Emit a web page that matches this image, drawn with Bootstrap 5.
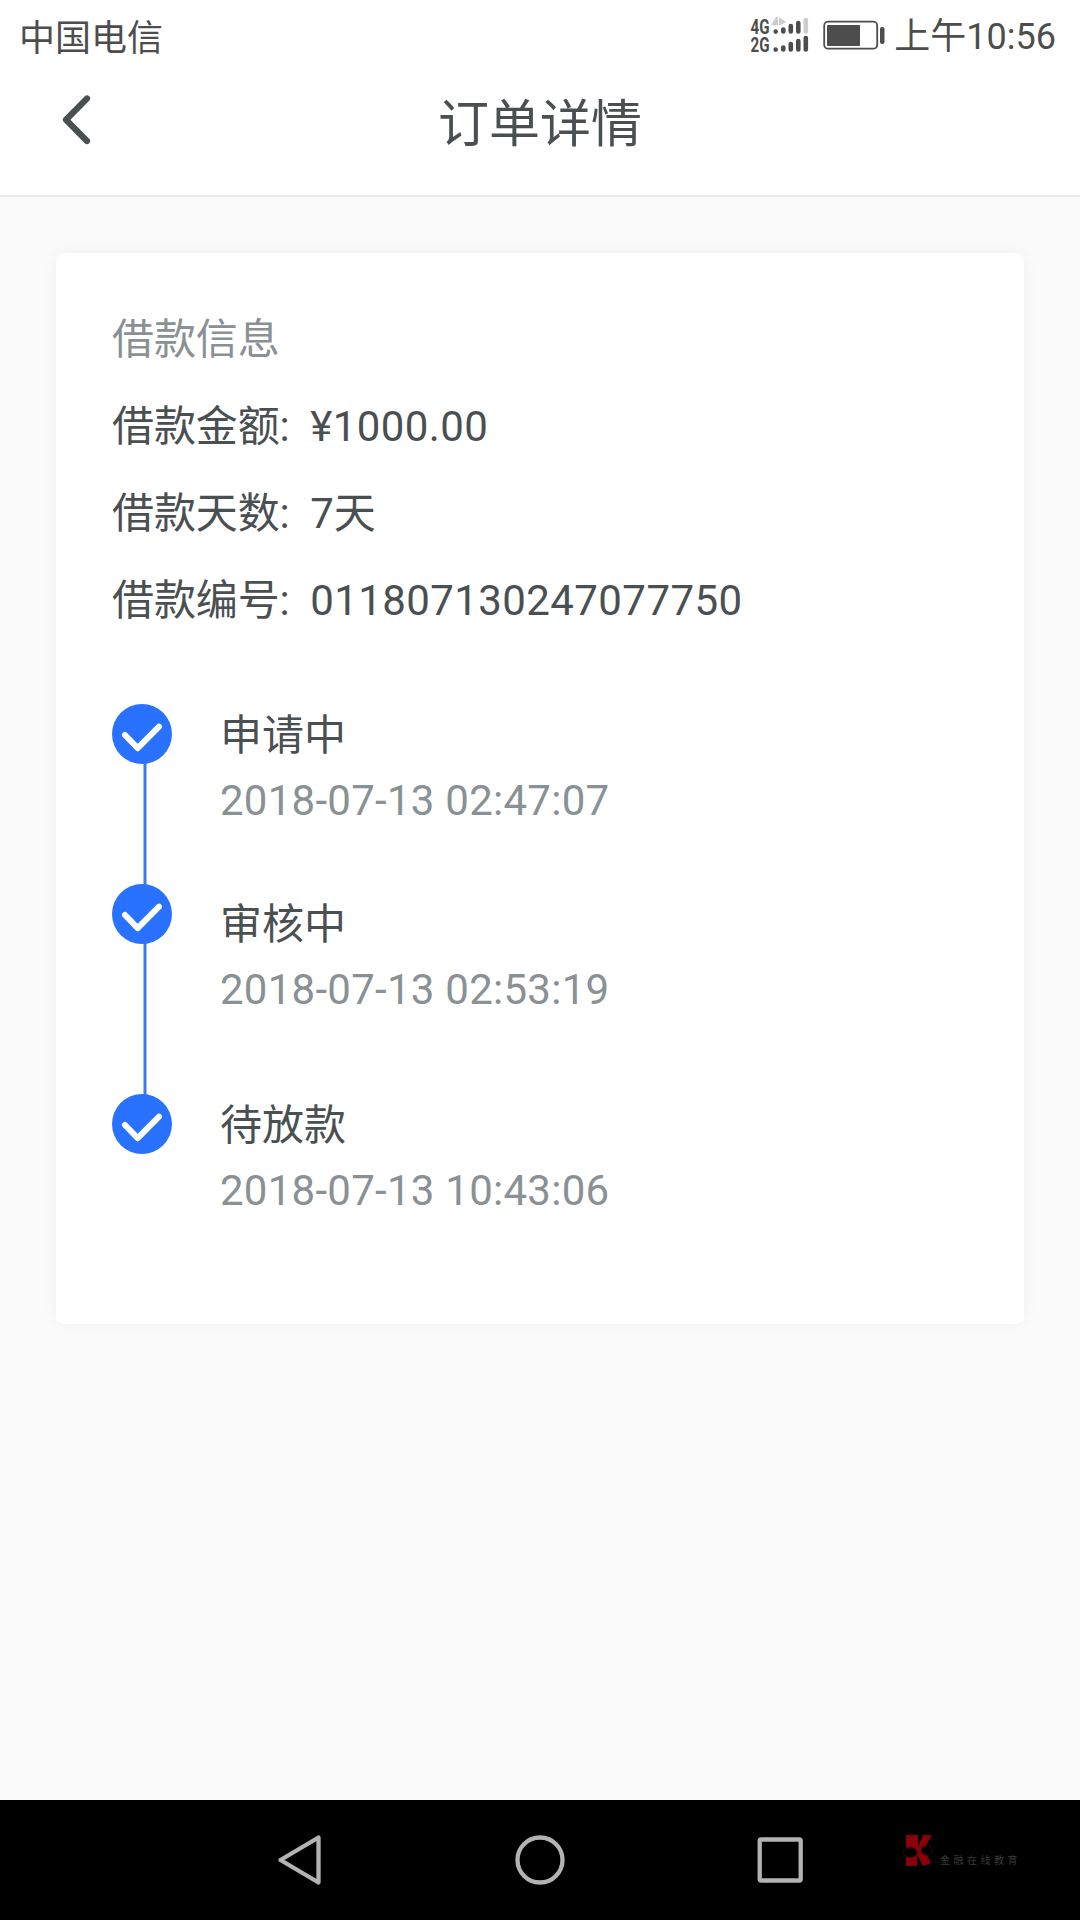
<!DOCTYPE html>
<html lang="zh-CN">
<head>
<meta charset="utf-8">
<meta name="viewport" content="width=device-width, initial-scale=1">
<title>订单详情</title>
<link href="https://cdn.jsdelivr.net/npm/bootstrap@5.3.0/dist/css/bootstrap.min.css" rel="stylesheet">
<style>
body{width:1080px;height:1920px;background:#fbfbfb;color:#4a4f52;font-family:Roboto,"Noto Sans CJK SC",sans-serif;overflow:hidden}
.status-bar{height:74px;padding:0 24px 0 19px;font-size:36px;line-height:78px;color:#4d4d4d;background:#fff}
.status-icons{margin-right:9px}
.title-bar{height:123px;background:#fff;border-bottom:2px solid #e8e8e8}
.back-btn{width:180px;padding:20px 0 0 59px}
.page-title{font-size:51px;line-height:101px;font-weight:400}
.order-card{margin:56px 56px 0;height:1071px;border:0;border-radius:8px;background:#fff;box-shadow:0 0 16px rgba(0,0,0,.05);padding:43px 56px 0;font-size:42px}
.info-line{height:87px;line-height:87px;white-space:pre;letter-spacing:-.1px}
.info-line .digits{letter-spacing:.4px}
.muted{color:#8a9194}
.track{width:108px;flex:none}
.steps{margin-top:56px}
.step-list{padding-top:3px}
.step-item{height:189px}
.step-item.tall{height:201px}
.step-name{height:65px;line-height:66px}
.step-time{height:66px;line-height:66px;color:#8a9194;letter-spacing:.26px}
.nav-keys{height:120px;background:#000}
.watermark-label{font-size:10px;letter-spacing:3.5px;color:#3a3a3a;line-height:12px;padding-top:55px}
</style>
</head>
<body class="d-flex flex-column">
<div class="status-bar d-flex justify-content-between">
  <span>中国电信</span>
  <div class="d-flex align-items-center">
    <svg class="status-icons" width="136" height="74" viewBox="749 0 136 74">
      <g font-family="Roboto" font-weight="700" font-size="20" fill="#4d4d4d">
        <text x="750.500" y="34" textLength="19" lengthAdjust="spacingAndGlyphs">4G</text>
        <text x="750.500" y="52" textLength="19" lengthAdjust="spacingAndGlyphs">2G</text>
      </g>
      <g stroke="#4d4d4d" stroke-width="4.600" stroke-linecap="round">
        <path d="M775.700 31.500v.1M783.300 29.500v2M790.800 26v5.500M798.300 23v8.500M775.700 49.500v.1M783.300 47.500v2M790.800 44v5.500M798.300 41v8.500M805.800 38v11.500"/>
        <path d="M805.800 20v11.500" stroke="#ccc"/>
      </g>
      <path d="M771 25l5-8h2v8zM779 17l7 5-5 3h-2z" fill="#ccc"/>
      <rect x="824.200" y="21.700" width="53" height="27" rx="4" fill="none" stroke="#4d4d4d" stroke-width="1.800"/>
      <rect x="827" y="25" width="33" height="21" rx="1" fill="#4d4d4d"/>
      <rect x="880" y="27" width="4.500" height="17" rx="2" fill="#4d4d4d"/>
    </svg>
    <span>上午10:56</span>
  </div>
</div>
<header class="title-bar d-flex justify-content-between">
  <div class="back-btn"><svg class="d-block" width="34" height="54" viewBox="60 94 34 54"><path d="M88 98.500L67 119.700L88 141" fill="none" stroke="#4a4f52" stroke-width="6.200" stroke-linecap="round" stroke-linejoin="round"/></svg></div>
  <h1 class="page-title mb-0">订单详情</h1>
  <div class="back-btn"></div>
</header>
<main class="flex-grow-1">
  <section class="order-card card">
    <div class="info-line muted">借款信息</div>
    <div class="info-line">借款金额:  <span class="digits">¥1000.00</span></div>
    <div class="info-line">借款天数:  7天</div>
    <div class="info-line">借款编号:  <span class="digits">011807130247077750</span></div>
    <div class="steps d-flex">
      <svg class="track" width="108" height="460" viewBox="112 700 108 460">
        <path d="M145 734V1124" stroke="#3f7de0" stroke-width="3"/>
        <g fill="#2972ff"><circle cx="142" cy="734" r="30"/><circle cx="142" cy="914" r="30"/><circle cx="142" cy="1124" r="30"/></g>
        <path d="M125 735l12.700 13.200L159 726.700M125 915l12.700 13.200L159 906.700M125 1125l12.700 13.200L159 1116.700" fill="none" stroke="#fff" stroke-width="6" stroke-linecap="round" stroke-linejoin="round"/>
      </svg>
      <div class="step-list">
        <div class="step-item"><div class="step-name">申请中</div><div class="step-time">2018-07-13 02:47:07</div></div>
        <div class="step-item tall"><div class="step-name">审核中</div><div class="step-time">2018-07-13 02:53:19</div></div>
        <div class="step-item"><div class="step-name">待放款</div><div class="step-time">2018-07-13 10:43:06</div></div>
      </div>
    </div>
  </section>
</main>
<footer class="nav-keys d-flex">
  <svg width="900" height="120" viewBox="0 1800 900 120" fill="none" stroke="#b3b3b3" stroke-width="4.300" stroke-linejoin="round">
    <path d="M280.500 1860L318.500 1837.500V1882.500Z"/><circle cx="540" cy="1860" r="22.500"/><rect x="759.700" y="1839.500" width="41" height="41" rx="1.500"/>
  </svg>
  <svg width="40" height="120" viewBox="900 1800 40 120">
    <path d="M906 1835h12v12l5-12h9l-8 14 7 14-8 3-6-11v11h-11z" fill="#8a0008"/>
    <g stroke="#2a0808"><ellipse cx="910" cy="1852.500" rx="7" ry="4.800"/><ellipse cx="927" cy="1850.500" rx="5.500" ry="4.600"/></g>
  </svg>
  <div class="watermark-label">金融在线教育</div>
</footer>
<script src="https://cdn.jsdelivr.net/npm/bootstrap@5.3.0/dist/js/bootstrap.bundle.min.js"></script>
</body>
</html>
